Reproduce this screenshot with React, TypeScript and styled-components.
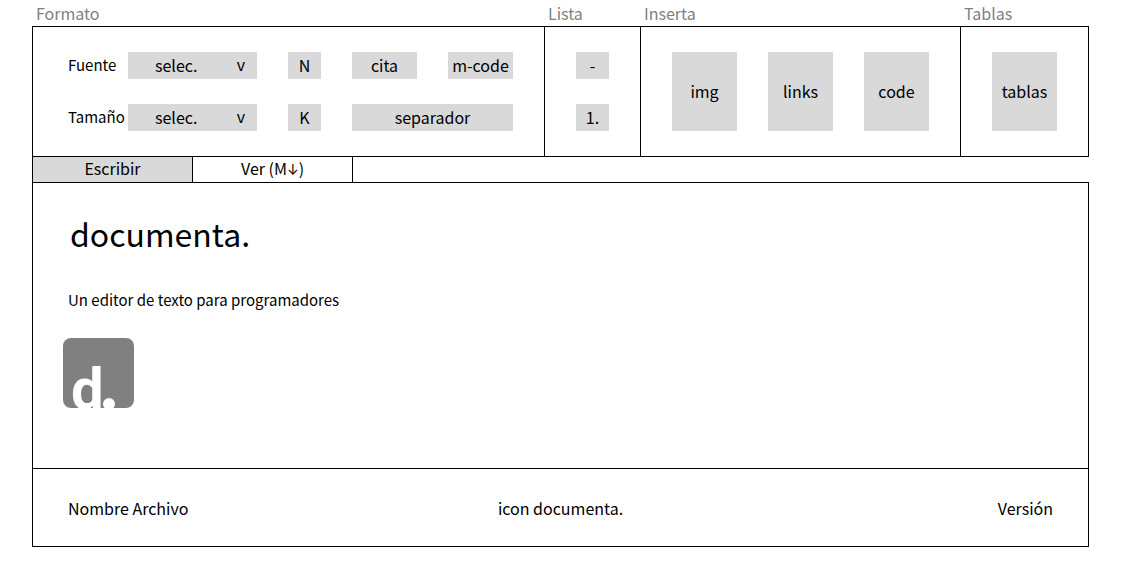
import React from "react";
import styled, { createGlobalStyle } from "styled-components";

const GlobalStyle = createGlobalStyle`
  *, *::before, *::after { box-sizing: border-box; }
  body {
    margin: 0;
    background: #ffffff;
    color: #000000;
    font-family: "Noto Sans CJK SC", "Noto Sans", sans-serif;
    font-size: 16px;
    line-height: 24px;
  }
  button, select { font: inherit; color: inherit; }
`;

const Page = styled.div`
  padding: 1px 33px 27px 32px;
`;

const Toolbar = styled.header`
  display: grid;
  grid-template-columns: 16fr 3fr 10fr 4fr;
  border-right: 1px solid transparent;
`;

const Group = styled.section`
  display: flex;
  flex-direction: column;
  &:last-child > div { margin-right: -1px; border-right: 1px solid #000000; }
`;

const GroupTitle = styled.h2`
  margin: 0 0 1px;
  padding-left: 4px;
  color: #808080;
  font-size: 16px;
  font-weight: 400;
  line-height: 24px;
`;

const GroupBody = styled.div<{ $columns: string; $start?: number }>`
  flex: 1;
  display: grid;
  grid-template-columns: ${(p) => p.$columns};
  gap: 25px 31px;
  padding: 25px 0 25px ${(p) => p.$start ?? 31}px;
  border: 1px solid #000000;
  border-right: 0;
`;

const Field = styled.div`
  display: flex;
  align-items: center;
`;

const FieldLabel = styled.label`
  width: 60px;
  padding-bottom: 2px;
  font-size: 15px;
`;

const SelectBox = styled.div`
  position: relative;
  flex: 1;
`;

const Select = styled.select`
  display: block;
  width: 100%;
  height: 27px;
  padding: 0 0 2px 27px;
  border: 0;
  border-radius: 0;
  background: #d9d9d9;
  appearance: none;
`;

const Arrow = styled.span`
  position: absolute;
  top: 0;
  right: 12px;
  pointer-events: none;
`;

const Tool = styled.button<{ $span?: number; $tall?: boolean }>`
  grid-column: span ${(p) => p.$span ?? 1};
  height: ${(p) => (p.$tall ? 79 : 27)}px;
  padding: 0 0 2px;
  border: 0;
  background: #d9d9d9;
  text-align: center;
`;

const Tabs = styled.nav`
  display: flex;
  border-left: 1px solid #000000;
`;

const Tab = styled.button<{ $active?: boolean }>`
  width: 160px;
  height: 25px;
  padding: 0 0 2px;
  border: 0;
  border-right: 1px solid #000000;
  line-height: 23px;
  background: ${(p) => (p.$active ? "#d9d9d9" : "#ffffff")};
`;

const DownArrow = styled.span`
  font-family: Inter, sans-serif;
  font-size: 14px;
  line-height: 1;
`;

const Sheet = styled.main`
  min-height: 287px;
  padding: 26px 35px 39px;
  border: 1px solid #000000;
`;

const Title = styled.h1`
  margin: 0 0 31px;
  padding-left: 2px;
  font-size: 32px;
  font-weight: 400;
  line-height: 48px;
`;

const Intro = styled.p`
  margin: 0 0 25px;
  font-size: 15px;
`;

const Logo = styled.svg`
  display: block;
  margin-left: -5px;
`;

const Footer = styled.footer`
  display: grid;
  grid-template-columns: 1fr auto 1fr;
  padding: 27px 35px 26px;
  border: 1px solid #000000;
  border-top: 0;
`;

const Version = styled.span`
  text-align: right;
`;

function Picker({ id, label }: { id: string; label: string }) {
  return (
    <Field>
      <FieldLabel htmlFor={id}>{label}</FieldLabel>
      <SelectBox>
        <Select id={id}>
          <option>selec.</option>
        </Select>
        <Arrow aria-hidden="true">v</Arrow>
      </SelectBox>
    </Field>
  );
}

export default function App() {
  return (
    <>
      <GlobalStyle />
      <Page>
        <Toolbar>
          <Group>
            <GroupTitle>Formato</GroupTitle>
            <GroupBody $columns="189px 33px 65px 65px" $start={35}>
              <Picker id="fuente" label="Fuente" />
              <Tool>N</Tool>
              <Tool>cita</Tool>
              <Tool>m-code</Tool>
              <Picker id="tamano" label="Tamaño" />
              <Tool>K</Tool>
              <Tool $span={2}>separador</Tool>
            </GroupBody>
          </Group>
          <Group>
            <GroupTitle>Lista</GroupTitle>
            <GroupBody $columns="33px">
              <Tool>-</Tool>
              <Tool>1.</Tool>
            </GroupBody>
          </Group>
          <Group>
            <GroupTitle>Inserta</GroupTitle>
            <GroupBody $columns="65px 65px 65px">
              <Tool $tall>img</Tool>
              <Tool $tall>links</Tool>
              <Tool $tall>code</Tool>
            </GroupBody>
          </Group>
          <Group>
            <GroupTitle>Tablas</GroupTitle>
            <GroupBody $columns="65px">
              <Tool $tall>tablas</Tool>
            </GroupBody>
          </Group>
        </Toolbar>
        <Tabs>
          <Tab $active>Escribir</Tab>
          <Tab>Ver (M<DownArrow>↓</DownArrow>)</Tab>
        </Tabs>
        <Sheet>
          <Title>documenta.</Title>
          <Intro>Un editor de texto para programadores</Intro>
          <Logo width="71" height="92" viewBox="0 0 71 92" role="img" aria-label="documenta">
            <rect y="1" width="71" height="70" rx="8" fill="#808080" />
            <text x="8" y="72" fill="#ffffff" fontFamily="Roboto" fontSize="58" fontWeight="700">d</text>
            <path d="M26 20H42V27L26 30Z" fill="#808080" />
            <circle cx="46" cy="67" r="6" fill="#ffffff" />
          </Logo>
        </Sheet>
        <Footer>
          <span>Nombre Archivo</span>
          <span>icon documenta.</span>
          <Version>Versión</Version>
        </Footer>
      </Page>
    </>
  );
}
